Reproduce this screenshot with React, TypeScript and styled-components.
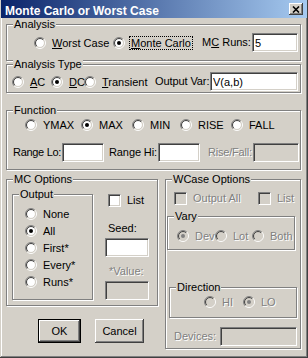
import React from "react";
import styled, { createGlobalStyle } from "styled-components";

const FACE = "#d4d0c8";
const SHADOW = "#808080";
const DARK = "#404040";

const GlobalStyle = createGlobalStyle`
  html, body {
    margin: 0;
    padding: 0;
    background: ${FACE};
  }
  body {
    font-family: "Liberation Sans", Arial, sans-serif;
    font-size: 11px;
    color: #000;
  }
  * { box-sizing: border-box; }
`;

const Window = styled.div`
  width: 308px;
  height: 358px;
  background: ${FACE};
  padding: 0 2px 2px 2px;
  box-shadow: inset -1px -1px ${DARK}, inset 1px 0 ${FACE}, inset -2px -2px ${SHADOW},
    inset 2px 0 #fff;
  display: flex;
  flex-direction: column;
`;

const TitleBar = styled.div`
  height: 18px;
  margin: 0 -1px;
  display: flex;
  align-items: flex-start;
  padding-left: 4px;
  background: linear-gradient(to right, #0a246a, #a6caf0);
`;

const TitleText = styled.span`
  margin-top: 4px;
  font-weight: bold;
  font-size: 12px;
  line-height: 14px;
  color: #fff;
  white-space: nowrap;
`;

const CloseBtn = styled.div`
  margin: 3px 4px 0 auto;
  width: 14px;
  height: 12px;
  background: ${FACE};
  box-shadow: inset -1px -1px ${DARK}, inset 1px 1px #fff, inset -2px -2px ${SHADOW};
  display: flex;
  align-items: center;
  justify-content: center;
`;

const Content = styled.div`
  display: flex;
  flex-direction: column;
  padding: 0 4px;
`;

const Group = styled.div<{ $w: number; $h: number; $mt?: number; $ml?: number }>`
  position: relative;
  width: ${(p) => p.$w}px;
  height: ${(p) => p.$h}px;
  margin-top: ${(p) => p.$mt ?? 0}px;
  margin-left: ${(p) => p.$ml ?? 0}px;
  border: 1px solid ${SHADOW};
  box-shadow: 1px 1px 0 #fff, inset 1px 1px 0 #fff;
  flex-shrink: 0;
`;

const Caption = styled.span`
  position: absolute;
  top: -7px;
  left: 6px;
  padding: 0 1px;
  line-height: 13px;
  background: ${FACE};
  white-space: nowrap;
`;

const Row = styled.div<{ $pt?: number; $pl?: number; $h?: number }>`
  display: flex;
  align-items: center;
  height: ${(p) => p.$h ?? 14}px;
  padding-left: ${(p) => p.$pl ?? 0}px;
  margin-top: ${(p) => p.$pt ?? 0}px;
  white-space: nowrap;
`;

const Column = styled.div<{ $ml?: number; $mt?: number }>`
  display: flex;
  flex-direction: column;
  margin-left: ${(p) => p.$ml ?? 0}px;
  margin-top: ${(p) => p.$mt ?? 0}px;
`;

const Opt = styled.div<{ $w?: number }>`
  display: flex;
  align-items: center;
  gap: 4px;
  flex-shrink: 0;
  width: ${(p) => (p.$w ? `${p.$w}px` : "auto")};
`;

const OptText = styled.span<{ $focus?: boolean; $disabled?: boolean }>`
  border: 1px dotted ${(p) => (p.$focus ? "#000" : "transparent")};
  padding: 0 1px;
  line-height: 12px;
  color: ${(p) => (p.$disabled ? SHADOW : "#000")};
  text-shadow: ${(p) => (p.$disabled ? "1px 1px 0 #fff" : "none")};
`;

const Label = styled.span<{
  $w?: number;
  $ml?: number;
  $mt?: number;
  $ls?: number;
  $disabled?: boolean;
}>`
  display: block;
  flex-shrink: 0;
  width: ${(p) => (p.$w ? `${p.$w}px` : "auto")};
  margin-left: ${(p) => p.$ml ?? 0}px;
  margin-top: ${(p) => p.$mt ?? 0}px;
  letter-spacing: ${(p) => p.$ls ?? 0}px;
  line-height: 13px;
  white-space: nowrap;
  color: ${(p) => (p.$disabled ? SHADOW : "#000")};
  text-shadow: ${(p) => (p.$disabled ? "1px 1px 0 #fff" : "none")};
`;

const Field = styled.input<{ $w: number; $h?: number; $ml?: number; $mt?: number }>`
  width: ${(p) => p.$w}px;
  height: ${(p) => p.$h ?? 19}px;
  margin: ${(p) => p.$mt ?? 0}px 0 0 ${(p) => p.$ml ?? 0}px;
  flex-shrink: 0;
  padding: 0 2px;
  font-family: inherit;
  font-size: 11px;
  color: #000;
  background: ${(p) => (p.disabled ? FACE : "#fff")};
  border: 1px solid;
  border-color: ${SHADOW} #fff #fff ${SHADOW};
  box-shadow: inset 1px 1px ${DARK}, inset -1px -1px ${FACE};
  outline: none;
`;

const Box = styled.span<{ $disabled?: boolean }>`
  display: block;
  width: 13px;
  height: 13px;
  flex-shrink: 0;
  background: ${(p) => (p.$disabled ? FACE : "#fff")};
  border: 1px solid;
  border-color: ${SHADOW} #fff #fff ${SHADOW};
  box-shadow: inset 1px 1px ${DARK}, inset -1px -1px ${FACE};
`;

const CheckOpt = styled.div<{ $w?: number; $ml?: number }>`
  display: flex;
  align-items: center;
  gap: 6px;
  flex-shrink: 0;
  width: ${(p) => (p.$w ? `${p.$w}px` : "auto")};
  margin-left: ${(p) => p.$ml ?? 0}px;
`;

const Button = styled.button<{ $w: number; $default?: boolean; $ml?: number }>`
  width: ${(p) => p.$w}px;
  height: 24px;
  margin-left: ${(p) => p.$ml ?? 0}px;
  padding: 0;
  font-family: inherit;
  font-size: 11px;
  color: #000;
  background: ${FACE};
  border: ${(p) => (p.$default ? "1px solid #000" : "none")};
  box-shadow: inset -1px -1px ${DARK}, inset 1px 1px #fff, inset -2px -2px ${SHADOW};
`;

const BottomArea = styled.div`
  display: flex;
  gap: 7px;
  margin-top: 9px;
`;

const ButtonRow = styled.div`
  display: flex;
  margin-top: 13px;
  padding-left: 32px;
`;

const OutputList = styled.div`
  display: flex;
  flex-direction: column;
  padding: 10px 0 0 12px;
`;

const OutputItem = styled.div`
  height: 17px;
  display: flex;
  align-items: center;
`;

const Radio: React.FC<{ checked?: boolean; disabled?: boolean }> = ({ checked, disabled }) => {
  const arc = (r: number) => {
    const d = r * 0.7071;
    return {
      tl: `M ${6 - d} ${6 + d} A ${r} ${r} 0 0 1 ${6 + d} ${6 - d}`,
      br: `M ${6 + d} ${6 - d} A ${r} ${r} 0 0 1 ${6 - d} ${6 + d}`,
    };
  };
  const o = arc(5.5);
  const i = arc(4.5);
  return (
    <svg width="12" height="12" viewBox="0 0 12 12" style={{ flexShrink: 0 }}>
      <circle cx="6" cy="6" r="4.2" fill={disabled ? FACE : "#fff"} />
      <path d={o.tl} stroke={SHADOW} fill="none" />
      <path d={o.br} stroke="#fff" fill="none" />
      <path d={i.tl} stroke={DARK} fill="none" />
      <path d={i.br} stroke={FACE} fill="none" />
      {checked && <circle cx="6" cy="6" r="2" fill={disabled ? SHADOW : "#000"} />}
    </svg>
  );
};

const RadioOpt: React.FC<{
  w?: number;
  checked?: boolean;
  disabled?: boolean;
  focus?: boolean;
  children: React.ReactNode;
}> = ({ w, checked, disabled, focus, children }) => (
  <Opt $w={w}>
    <Radio checked={checked} disabled={disabled} />
    <OptText $focus={focus} $disabled={disabled}>
      {children}
    </OptText>
  </Opt>
);

const Check: React.FC<{ w?: number; ml?: number; disabled?: boolean; children: React.ReactNode }> = ({
  w,
  ml,
  disabled,
  children,
}) => (
  <CheckOpt $w={w} $ml={ml}>
    <Box $disabled={disabled} />
    <Label $disabled={disabled}>{children}</Label>
  </CheckOpt>
);

export default function App() {
  return (
    <>
      <GlobalStyle />
      <Window>
        <TitleBar>
          <TitleText>Monte Carlo or Worst Case</TitleText>
          <CloseBtn>
            <svg width="8" height="7" viewBox="0 0 8 7">
              <path d="M1 0.5 L7 6.5 M7 0.5 L1 6.5" stroke="#000" strokeWidth="1.6" />
            </svg>
          </CloseBtn>
        </TitleBar>
        <Content>
          <Group $w={295} $h={37} $mt={6}>
            <Caption>Analysis</Caption>
            <Row $pt={8} $pl={27} $h={19}>
              <RadioOpt w={79}>
                <u>W</u>orst Case
              </RadioOpt>
              <RadioOpt w={89} checked focus>
                <u>M</u>onte Carlo
              </RadioOpt>
              <Label $w={50}>
                M<u>C</u> Runs:
              </Label>
              <Field $w={46} readOnly value="5" />
            </Row>
          </Group>

          <Group $w={295} $h={29} $mt={3}>
            <Caption>Analysis Type</Caption>
            <Row $pt={7} $pl={5} $h={19}>
              <RadioOpt w={39}>
                <u>A</u>C
              </RadioOpt>
              <RadioOpt w={33} checked>
                <u>D</u>C
              </RadioOpt>
              <RadioOpt w={71}>
                <u>T</u>ransient
              </RadioOpt>
              <Label $w={55} $ls={-0.1}>
                Output Var:
              </Label>
              <Field $w={88} readOnly value="V(a,b)" />
            </Row>
          </Group>

          <Group $w={295} $h={60} $mt={17}>
            <Caption>Function</Caption>
            <Row $pt={7} $pl={18}>
              <RadioOpt w={56}>YMAX</RadioOpt>
              <RadioOpt w={51} checked>
                MAX
              </RadioOpt>
              <RadioOpt w={48}>MIN</RadioOpt>
              <RadioOpt w={51}>RISE</RadioOpt>
              <RadioOpt>FALL</RadioOpt>
            </Row>
            <Row $pt={11} $pl={6} $h={19}>
              <Label $w={49} $ls={-0.3}>
                Range Lo:
              </Label>
              <Field $w={42} readOnly value="" />
              <Label $w={49} $ml={5} $ls={-0.1}>
                Range Hi:
              </Label>
              <Field $w={42} readOnly value="" />
              <Label $w={45} $ml={8} $ls={-0.2} $disabled>
                Rise/Fall:
              </Label>
              <Field $w={46} disabled value="" readOnly />
            </Row>
          </Group>

          <BottomArea>
            <Column>
              <Group $w={152} $h={127} style={{ display: "flex" }}>
                <Caption>MC Options</Caption>
                <Group $w={81} $h={106} $mt={14} $ml={5}>
                  <Caption>Output</Caption>
                  <OutputList>
                    <OutputItem>
                      <RadioOpt>None</RadioOpt>
                    </OutputItem>
                    <OutputItem>
                      <RadioOpt checked>All</RadioOpt>
                    </OutputItem>
                    <OutputItem>
                      <RadioOpt>First*</RadioOpt>
                    </OutputItem>
                    <OutputItem>
                      <RadioOpt>Every*</RadioOpt>
                    </OutputItem>
                    <OutputItem>
                      <RadioOpt>Runs*</RadioOpt>
                    </OutputItem>
                  </OutputList>
                </Group>
                <Column $ml={12} $mt={14}>
                  <Check ml={3}>List</Check>
                  <Label $ml={3} $mt={15}>
                    Seed:
                  </Label>
                  <Field $w={44} $mt={3} readOnly value="" />
                  <Label $ml={4} $mt={8} $disabled>
                    *Value:
                  </Label>
                  <Field $w={44} $mt={3} disabled readOnly value="" />
                </Column>
              </Group>
              <ButtonRow>
                <Button $w={43} $default>
                  OK
                </Button>
                <Button $w={49} $ml={14}>
                  Cancel
                </Button>
              </ButtonRow>
            </Column>

            <Group $w={136} $h={170}>
              <Caption>WCase Options</Caption>
              <Row $pt={12} $pl={8} $h={13}>
                <Check w={84} disabled>
                  Output All
                </Check>
                <Check disabled>List</Check>
              </Row>
              <Group $w={128} $h={34} $mt={11} $ml={1}>
                <Caption>Vary</Caption>
                <Row $pt={12} $pl={9}>
                  <RadioOpt w={38} checked disabled>
                    Dev
                  </RadioOpt>
                  <RadioOpt w={37} disabled>
                    Lot
                  </RadioOpt>
                  <RadioOpt disabled>Both</RadioOpt>
                </Row>
              </Group>
              <Group $w={128} $h={31} $mt={37} $ml={3}>
                <Caption>Direction</Caption>
                <Row $pt={7} $pl={34}>
                  <RadioOpt w={39} disabled>
                    HI
                  </RadioOpt>
                  <RadioOpt checked disabled>
                    LO
                  </RadioOpt>
                </Row>
              </Group>
              <Row $pt={9} $pl={8} $h={19}>
                <Label $w={46} $disabled>
                  Devices:
                </Label>
                <Field $w={77} disabled readOnly value="" />
              </Row>
            </Group>
          </BottomArea>
        </Content>
      </Window>
    </>
  );
}
